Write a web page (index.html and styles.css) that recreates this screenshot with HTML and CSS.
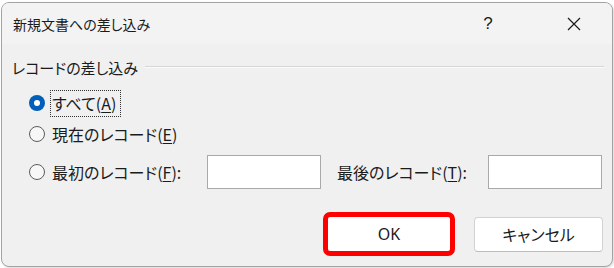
FILE: index.html
```html
<!DOCTYPE html>
<html lang="ja">
<head>
<meta charset="utf-8">
<link rel="stylesheet" href="styles.css">
</head>
<body>
<div class="dialog">
  <div class="titlebar">
    <div class="title">新規文書への差し込み</div>
    <div class="cap help">?</div>
    <div class="cap close">
      <svg width="14" height="14" viewBox="0 0 14 14"><path d="M1 1 L13 13 M13 1 L1 13" stroke="#1a1a1a" stroke-width="1.2" fill="none"/></svg>
    </div>
  </div>
  <div class="group-header">
    <span class="group-label">レコードの差し込み</span>
    <span class="group-line"></span>
  </div>
  <div class="row row1">
    <span class="radio checked"></span>
    <span class="label focus">すべて(<u>A</u>)</span>
  </div>
  <div class="row row2">
    <span class="radio"></span>
    <span class="label">現在のレコード(<u>E</u>)</span>
  </div>
  <div class="row row3">
    <span class="radio"></span>
    <span class="label first">最初のレコード(<u>F</u>):</span>
    <span class="textbox"></span>
    <span class="label last">最後のレコード(<u>T</u>):</span>
    <span class="textbox"></span>
  </div>
  <div class="buttons">
    <div class="btn-ok"><span>OK</span></div>
    <div class="btn-cancel">キャンセル</div>
  </div>
</div>
</body>
</html>
```
FILE: styles.css
```css
html, body {
  margin: 0;
  padding: 0;
  background: #ffffff;
}
body {
  width: 614px;
  height: 268px;
  overflow: hidden;
  font-family: "Noto Sans CJK JP", "Noto Sans", sans-serif;
  font-feature-settings: "palt";
  color: #1b1b1b;
}
.dialog {
  box-sizing: border-box;
  margin: 2px 0 0 1px;
  width: 612px;
  height: 265px;
  border: 1px solid #a3a3a3;
  border-radius: 8px;
  background: #f0f0f0;
  box-shadow: 1px 1px 2px rgba(0,0,0,0.15);
  display: flex;
  flex-direction: column;
  overflow: hidden;
}
.titlebar {
  height: 41px;
  background: #f3f3f3;
  display: flex;
  align-items: center;
  padding-left: 11px;
  flex: none;
}
.title {
  flex: 1;
  font-size: 14px;
}
.cap {
  width: 46px;
  height: 41px;
  display: flex;
  align-items: center;
  justify-content: center;
}
.help {
  font-family: "Liberation Sans", sans-serif;
  font-size: 17px;
  margin-right: 40px;
}
.close {
  margin-right: 15px;
}
.group-header {
  display: flex;
  align-items: flex-start;
  margin-top: 14px;
  height: 20px;
  padding-left: 10px;
  padding-right: 8px;
}
.group-label {
  font-size: 15px;
  line-height: 20px;
}
.group-line {
  flex: 1;
  margin-top: 8px;
  margin-left: 7px;
  height: 1px;
  background: #d7d7d7;
  border-bottom: 1px solid #fbfbfb;
}
.row {
  display: flex;
  align-items: center;
  padding-left: 27px;
  font-size: 16px;
}
.row1 { margin-top: 12px; height: 26px; }
.row2 { margin-top: 6px; height: 24px; }
.row3 { margin-top: 9px; height: 34px; }
.radio {
  box-sizing: border-box;
  width: 16px;
  height: 16px;
  border-radius: 50%;
  border: 1px solid #5c5c5c;
  background: #f7f7f7;
  flex: none;
  margin-right: 7px;
  position: relative;
}
.radio.checked {
  border: none;
  background: #005fb8;
}
.radio.checked::after {
  content: "";
  position: absolute;
  left: 5px;
  top: 5px;
  width: 6px;
  height: 6px;
  border-radius: 50%;
  background: #ffffff;
}
.label {
  white-space: nowrap;
}
.label u {
  text-underline-offset: 2px;
}
.focus {
  box-sizing: border-box;
  height: 27px;
  line-height: 25px;
  padding: 0 4px 0 1px;
  margin-left: -2px;
  border: 1px dotted #333;
}
.first {
  width: 155px;
}
.last {
  width: 151px;
  margin-left: 16px;
}
.textbox {
  box-sizing: border-box;
  width: 114px;
  height: 34px;
  background: #ffffff;
  border: 1px solid #a9a9a9;
  flex: none;
}
.buttons {
  display: flex;
  align-items: center;
  margin-top: 23px;
  padding-left: 321px;
}
.btn-ok {
  box-sizing: border-box;
  width: 132px;
  height: 44px;
  border: 5px solid #ff0000;
  border-radius: 7px;
  background: #ffffff;
  display: flex;
  align-items: center;
  justify-content: center;
  font-family: "Noto Sans", sans-serif;
  font-size: 16px;
}
.btn-cancel {
  box-sizing: border-box;
  margin-left: 19px;
  width: 129px;
  height: 35px;
  border: 1px solid #d2d2d2;
  border-bottom-color: #bdbdbd;
  border-radius: 4px;
  background: #ffffff;
  display: flex;
  align-items: center;
  justify-content: center;
  font-size: 16px;
}
```
